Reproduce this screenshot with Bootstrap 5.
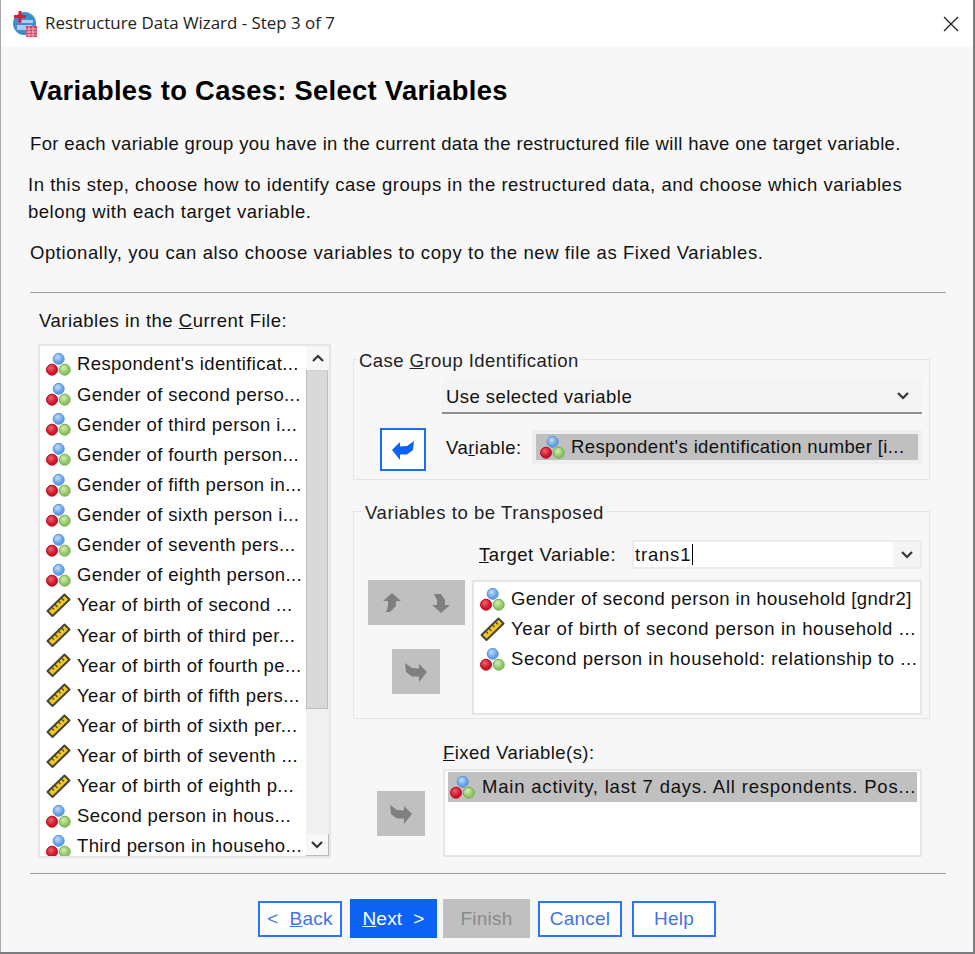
<!DOCTYPE html>
<html lang="en">
<head>
<meta charset="utf-8">
<title>Restructure Data Wizard</title>
<link rel="stylesheet" href="https://cdn.jsdelivr.net/npm/bootstrap@5.3.0/dist/css/bootstrap.min.css">
<style>
html,body{margin:0;height:954px;overflow:hidden}
body{background:#7d7d80;font-family:"Liberation Sans",Arial,sans-serif;font-size:18.5px;letter-spacing:.44px;color:#111;line-height:1.2}
.win{width:973px;height:952px;background:#f7f7f7;border-left:1px solid #a8a8a8;overflow:hidden}
.tbar{height:47px;background:#fff;padding-left:12px}
.tname{font-family:"Open Sans",sans-serif;font-size:16.9px;letter-spacing:0;margin-left:8px;color:#222}
.xbtn{width:16px;height:16px;margin-left:auto;margin-right:14px}
.wbody{padding:0 27px 0 29px}
.wtitle{font-size:27.3px;font-weight:700;letter-spacing:.33px;margin:28px 0 0;color:#000;line-height:31px}
.para{margin:0}
.p1{margin-top:27px;height:22px;letter-spacing:.36px}
.p2{margin-top:16px;margin-left:-2px;line-height:27px;letter-spacing:.52px}
.p3{margin-top:17px;height:22px;letter-spacing:.58px}
.rule{height:1px;background:#9c9c9c;margin:0}
.r1{margin-top:28px}
.cols{height:580px;margin-left:-1px}
.leftc{width:293px;margin-left:9px}
.leftl{margin-top:17px;height:22px;padding-left:1px;letter-spacing:.5px}
.vlist{border:2px solid #e6e6e6;background:#fff}
.left-box{height:514px;margin-top:12px;overflow:hidden;position:relative;letter-spacing:.39px}
.vitem{border:0;background:transparent;padding:0 0 0 6px;height:30.13px;display:flex;align-items:center;gap:6px;white-space:nowrap;border-radius:0;color:#111}
.left-box .vitem:first-child{margin-top:3.500px}
.vico{width:25px;height:25px;flex:none}
.sbar{position:absolute;top:0;right:0;bottom:0;width:23px;background:#f0f0f0}
.sarrow{height:24px;background:#f7f7f7;display:flex;align-items:center;justify-content:center}
.sthumb{height:339px;background:#d9d9d9;border:1px solid #bdbdbd;border-top-color:#d0d0d0;margin-right:1px}
.sdown{position:absolute;bottom:0;left:0;right:0;height:22px;border-right:1px solid #bbb;border-bottom:1px solid #bbb}
.rightc{width:577px;margin-left:22px}
.grp{border:1px solid #e5e5e5;padding:0;margin:0;min-width:0}
.grp legend{float:none;width:auto;font-size:18.5px;margin:0 0 0 3px;padding:4px 2px 0;line-height:22px;color:#222}
.g1{height:134px;margin-top:53px}
.g2{height:221px;margin-top:18px;}
.g2 legend{margin-left:9px;letter-spacing:.58px}
.combo{margin:6px 0 0 88px;width:480px;height:36px;background:#f4f4f4;border-bottom:2px solid #8e8e8e;padding:0 4px}
.ctxt{padding-top:4px}
.chev{width:14px;height:9px;margin-left:auto;margin-right:8px}
.btn.blubtn{width:46px;height:43px;border:2px solid #1a6cff;background:#fff;margin-left:26px;border-radius:0;padding:0;display:flex;align-items:center;justify-content:center}
.row1{margin-top:14px}
.vlab{margin:3px 0 0 20px;width:86px;line-height:34px}
.vfield{width:390px;height:34px;margin-top:2px;border:4px solid #efefef;background:#c0c0c0;padding:1px 0 0 4px;gap:6px;white-space:nowrap;border-radius:0;letter-spacing:.38px}
.trow{margin:16px 0 0 125px;height:29px}
.tlab{width:153px;padding-top:1px;letter-spacing:.56px}
.tinp{width:290px;height:29px;border:2px solid #ececec;background:#fff;padding-left:1px}
.tval{padding-top:2px;letter-spacing:.8px}
.tcar{display:inline-block;width:1px;height:21px;background:#000;margin-left:1px;vertical-align:-4px}
.tarr{margin-left:auto;width:27px;height:100%;background:#f4f4f4;display:flex;align-items:center;justify-content:center}
.gbody{margin-top:11px}
.ctrls{width:104px;margin-left:14px}
.graybtn,.btn.graybtn,.btn.graybtn:disabled{background:#c0c0c0;border:0;border-radius:0;padding:0;display:flex;align-items:center;justify-content:center;opacity:1}
.ud{width:97px;height:45px;justify-content:space-between;padding:0 15px}
.btn.mv,.btn.mv:disabled{width:48px;height:45px;margin:24px 0 0 24px}
.tlist{width:450px;height:135px;border-width:2px;margin-left:0;padding:2px 0 0 3px}
.tlist .vitem{padding-left:3px}
.tlist .vw1{letter-spacing:.6px}
.tlist .vw2{letter-spacing:.55px}
.fctrl{width:48px;margin-left:24px;padding-top:22px}
.flab{margin-left:90px;height:20px;line-height:20px;margin-top:24px}
.frow{margin-top:6px}
.fbox{width:479px;height:88px;padding:1px 3px;margin-left:18px}
.fbox .vitem{background:#c0c0c0;padding-left:2px;gap:7px;letter-spacing:.8px}
.btn.fmv,.btn.fmv:disabled{margin:0}
.r2{margin-top:0}
.foot{gap:0;margin-top:25px;padding-left:228px}
.btn.wbtn,.btn.wbtn:disabled{font-size:19px;letter-spacing:.2px;border-radius:0;height:36px;padding:0;line-height:1;border:2px solid #2a74ff;background:#fff;color:#3f74e8;width:84px;margin-right:8px;opacity:1}
.btn.wbtn.nxt{height:39px;width:87px;background:#0b62f5;border-color:#0b62f5;color:#fff;margin-right:6px}
.btn.wbtn.fin:disabled{height:39px;width:87px;background:#c0c0c0;border-color:#c0c0c0;color:#8a8a8a;margin-right:8px}
.btn.wbtn.hlp{margin-left:2px;margin-right:0}
</style>
</head>
<body>
<svg width="0" height="0" class="d-block" aria-hidden="true">
<defs>
<radialGradient id="gb" cx=".4" cy=".35"><stop offset="0" stop-color="#c4defa"/><stop offset="1" stop-color="#5f9fe6"/></radialGradient>
<radialGradient id="gr" cx=".4" cy=".35"><stop offset="0" stop-color="#f06070"/><stop offset="1" stop-color="#cc1226"/></radialGradient>
<radialGradient id="gg" cx=".4" cy=".35"><stop offset="0" stop-color="#d6edb0"/><stop offset="1" stop-color="#8cc461"/></radialGradient>
<symbol id="nom" viewBox="0 0 25 25">
<circle cx="12.700" cy="6.800" r="5.500" fill="url(#gb)" stroke="#5a93d8"/>
<circle cx="18.700" cy="17.700" r="5.500" fill="url(#gg)" stroke="#6fae4c"/>
<circle cx="6" cy="17.700" r="5.500" fill="url(#gr)" stroke="#b50f20"/>
</symbol>
<symbol id="rul" viewBox="0 0 25 25">
<path d="M1.500 18 18.500 1.500 23.500 6.500 6.500 23Z" fill="#f2c81e" stroke="#45453a" stroke-width="2" stroke-linejoin="round"/>
<path d="M6 14.500l2 2M9 11.500l2.500 2.500M12.500 8l2 2M15.500 5l2.500 2.500" stroke="#45453a" stroke-width="1.100" fill="none"/>
</symbol>
<symbol id="chv" viewBox="0 0 14 9"><path d="M2 2 7 7 12 2" fill="none" stroke="#333" stroke-width="2.200"/></symbol>
<symbol id="arl" viewBox="0 0 22 20"><path d="M0 10 8 2V6.500L15 6 22 1 21 10 15 14.500H8V20Z"/></symbol>
<symbol id="arr" viewBox="0 0 22 20"><path d="M22 10 14 2V6.500L7 6 0 1 1 10 7 14.500H14V20Z"/></symbol>
<symbol id="aru" viewBox="0 0 18 20"><path d="M9 0 18 8H13V13L7 19H3L5 13V8H0Z"/></symbol>
<symbol id="ard" viewBox="0 0 18 20"><path d="M9 20 0 12H5V7L2 1H9L13 7V12H18Z"/></symbol>
</defs>
</svg>
<div class="win">
  <div class="tbar d-flex align-items-center">
    <svg width="24" height="26" viewBox="0 0 24 26" aria-hidden="true">
      <circle cx="11.500" cy="12.500" r="11.500" fill="#3f8ecb"/>
      <path d="M8 9h12v3H8zM4 14h15v5H4z" fill="#a8cfee"/>
      <path d="M5.500 0h3v4h4.500v3H8.500v4.500h-3V7H1V4h4.500z" fill="#d81e3c"/>
      <path d="M13 15h11v11H13z" fill="#cf3f63"/>
      <path d="M13 18h11M13 21h11M13 24h11M16 15v11M20 15v11" stroke="#f6c9d4" stroke-width=".8"/>
    </svg>
    <span class="tname">Restructure Data Wizard - Step 3 of 7</span>
    <svg class="xbtn" viewBox="0 0 16 16" aria-label="Close"><path d="M1 1 15 15M15 1 1 15" stroke="#222" stroke-width="1.300"/></svg>
  </div>
  <div class="wbody">
    <h1 class="wtitle">Variables to Cases: Select Variables</h1>
    <p class="para p1">For each variable group you have in the current data the restructured file will have one target variable.</p>
    <p class="para p2">In this step, choose how to identify case groups in the restructured data, and choose which variables<br>belong with each target variable.</p>
    <p class="para p3">Optionally, you can also choose variables to copy to the new file as Fixed Variables.</p>
    <div class="rule r1"></div>
    <div class="cols d-flex">
      <div class="leftc">
        <div class="leftl">Variables in the <u>C</u>urrent File:</div>
        <div class="vlist left-box">
          <ul class="list-group" id="lst">
            <li class="list-group-item vitem"><svg class="vico"><use href="#nom"/></svg>Respondent's identificat...</li>
            <li class="list-group-item vitem"><svg class="vico"><use href="#nom"/></svg>Gender of second perso...</li>
            <li class="list-group-item vitem"><svg class="vico"><use href="#nom"/></svg>Gender of third person i...</li>
            <li class="list-group-item vitem"><svg class="vico"><use href="#nom"/></svg>Gender of fourth person...</li>
            <li class="list-group-item vitem"><svg class="vico"><use href="#nom"/></svg>Gender of fifth person in...</li>
            <li class="list-group-item vitem"><svg class="vico"><use href="#nom"/></svg>Gender of sixth person i...</li>
            <li class="list-group-item vitem"><svg class="vico"><use href="#nom"/></svg>Gender of seventh pers...</li>
            <li class="list-group-item vitem"><svg class="vico"><use href="#nom"/></svg>Gender of eighth person...</li>
            <li class="list-group-item vitem"><svg class="vico"><use href="#rul"/></svg>Year of birth of second ...</li>
            <li class="list-group-item vitem"><svg class="vico"><use href="#rul"/></svg>Year of birth of third per...</li>
            <li class="list-group-item vitem"><svg class="vico"><use href="#rul"/></svg>Year of birth of fourth pe...</li>
            <li class="list-group-item vitem"><svg class="vico"><use href="#rul"/></svg>Year of birth of fifth pers...</li>
            <li class="list-group-item vitem"><svg class="vico"><use href="#rul"/></svg>Year of birth of sixth per...</li>
            <li class="list-group-item vitem"><svg class="vico"><use href="#rul"/></svg>Year of birth of seventh ...</li>
            <li class="list-group-item vitem"><svg class="vico"><use href="#rul"/></svg>Year of birth of eighth p...</li>
            <li class="list-group-item vitem"><svg class="vico"><use href="#nom"/></svg>Second person in hous...</li>
            <li class="list-group-item vitem"><svg class="vico"><use href="#nom"/></svg>Third person in househo...</li>
          </ul>
          <div class="sbar">
            <div class="sarrow"><svg width="14" height="9" viewBox="0 0 14 9"><path d="M2 7 7 2 12 7" fill="none" stroke="#333" stroke-width="2.200"/></svg></div>
            <div class="sthumb"></div>
            <div class="sarrow sdown"><svg width="14" height="9"><use href="#chv"/></svg></div>
          </div>
        </div>
      </div>
      <div class="rightc">
        <fieldset class="grp g1">
          <legend>Case <u>G</u>roup Identification</legend>
          <div class="combo d-flex align-items-center"><span class="ctxt">Use selected variable</span><svg class="chev"><use href="#chv"/></svg></div>
          <div class="row1 d-flex align-items-start">
            <button type="button" class="btn blubtn" aria-label="Move"><svg width="22" height="20" fill="#0b62f5"><use href="#arl"/></svg></button>
            <span class="vlab">Va<u>r</u>iable:</span>
            <div class="vfield d-flex align-items-center"><svg class="vico"><use href="#nom"/></svg>Respondent's identification number [i...</div>
          </div>
        </fieldset>
        <fieldset class="grp g2">
          <legend>Variables to be Transposed</legend>
          <div class="trow d-flex align-items-center">
            <span class="tlab"><u>T</u>arget Variable:</span>
            <div class="tinp d-flex align-items-center"><span class="tval">trans1<span class="tcar"></span></span><span class="tarr"><svg width="14" height="9"><use href="#chv"/></svg></span></div>
          </div>
          <div class="gbody d-flex">
            <div class="ctrls">
              <div class="graybtn ud d-flex align-items-center"><svg width="18" height="20" fill="#7f7f7f"><use href="#aru"/></svg><svg width="18" height="20" fill="#7f7f7f"><use href="#ard"/></svg></div>
              <button type="button" class="btn graybtn mv" disabled aria-label="Move"><svg width="22" height="20" fill="#7f7f7f"><use href="#arr"/></svg></button>
            </div>
            <div class="vlist tlist">
              <div class="vitem"><svg class="vico"><use href="#nom"/></svg>Gender of second person in household [gndr2]</div>
              <div class="vitem vw1"><svg class="vico"><use href="#rul"/></svg>Year of birth of second person in household ...</div>
              <div class="vitem vw2"><svg class="vico"><use href="#nom"/></svg>Second person in household: relationship to ...</div>
            </div>
          </div>
        </fieldset>
        <div class="flab"><u>F</u>ixed Variable(s):</div>
        <div class="frow d-flex">
          <div class="fctrl"><button type="button" class="btn graybtn mv fmv" disabled aria-label="Move"><svg width="22" height="20" fill="#7f7f7f"><use href="#arr"/></svg></button></div>
          <div class="vlist fbox"><div class="vitem"><svg class="vico"><use href="#nom"/></svg>Main activity, last 7 days. All respondents. Pos...</div></div>
        </div>
      </div>
    </div>
    <div class="rule r2"></div>
    <div class="foot d-flex align-items-center">
      <button type="button" class="btn wbtn">&lt;&nbsp; <u>B</u>ack</button>
      <button type="button" class="btn wbtn nxt"><u>N</u>ext&nbsp; &gt;</button>
      <button type="button" class="btn wbtn fin" disabled>Finish</button>
      <button type="button" class="btn wbtn">Cancel</button>
      <button type="button" class="btn wbtn hlp">Help</button>
    </div>
  </div>
</div>
<script src="https://cdn.jsdelivr.net/npm/bootstrap@5.3.0/dist/js/bootstrap.bundle.min.js"></script>
</body>
</html>
